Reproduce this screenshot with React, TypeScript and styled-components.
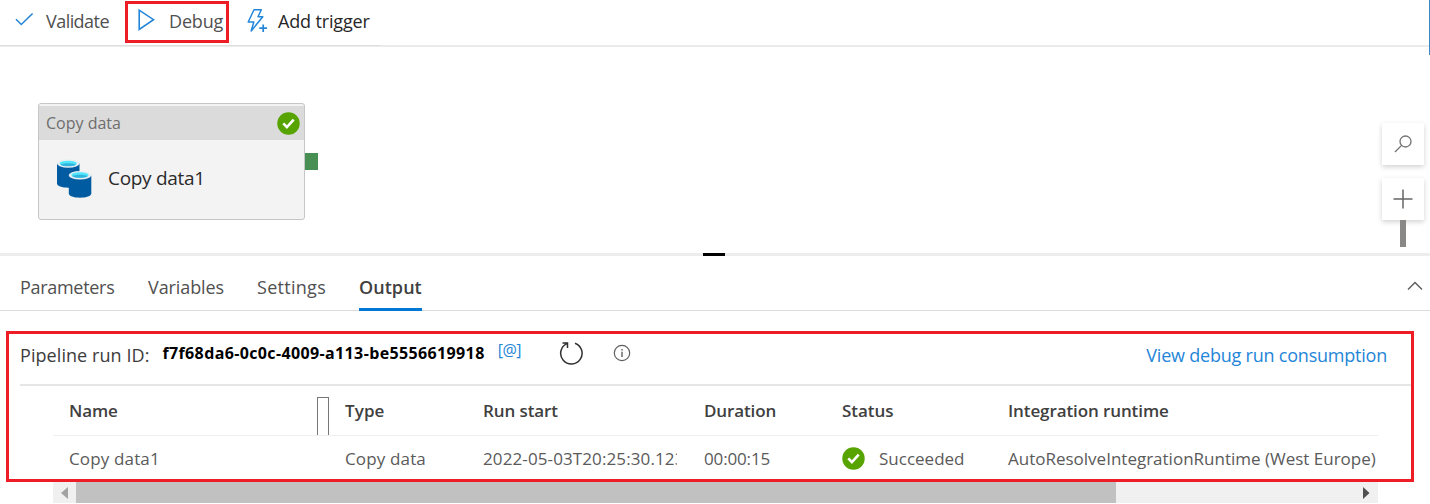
import React from "react";
import styled, { createGlobalStyle } from "styled-components";

const Global = createGlobalStyle`
  * { box-sizing: border-box; }
  body { margin: 0; background: #fff; overflow: hidden; font-family: "Open Sans", "Noto Sans", sans-serif; }
  svg { display: block; flex: none; }
`;

const Page = styled.div`
  position: relative;
  display: flex;
  flex-direction: column;
  width: 1430px;
  height: 504px;
  overflow: hidden;
  background: #fff;
`;

const Label = styled.span<{ $size?: number; $track?: number; $color?: string; $weight?: number }>`
  font-size: ${(p) => p.$size ?? 18}px;
  line-height: 24px;
  letter-spacing: ${(p) => p.$track ?? 0}px;
  color: ${(p) => p.$color ?? "#505050"};
  font-weight: ${(p) => p.$weight ?? 400};
  white-space: nowrap;
`;

const EdgeBar = styled.div`
  position: absolute;
  top: 0;
  right: 0;
  width: 1px;
  height: 55px;
  background: #3b8bcb;
`;

const Toolbar = styled.div`
  display: flex;
  height: 47px;
  flex: none;
  border-bottom: 2px solid #ebebeb;
`;

const ToolGroup = styled.div`
  display: flex;
  align-items: flex-start;
  width: 380px;
  height: 46px;
  border-bottom: 1px solid #dedede;
`;

const ToolButton = styled.div<{ $pad: string; $gap: number }>`
  display: flex;
  align-items: flex-start;
  gap: ${(p) => p.$gap}px;
  padding: ${(p) => p.$pad};
`;

const ToolLabel = styled(Label)`
  margin-top: 9px;
`;

const DebugButton = styled(ToolButton)`
  width: 104px;
  height: 42px;
  margin: 1px 0 0 16px;
  border: 3px solid #ee1c25;

  ${ToolLabel} { margin-top: 5px; }
`;

const Canvas = styled.div`
  display: flex;
  justify-content: space-between;
  height: 206px;
  flex: none;
  padding: 56px 6px 0 38px;
`;

const ActivityWrap = styled.div`
  display: flex;
  align-items: flex-start;
`;

const Activity = styled.div`
  width: 267px;
  height: 117px;
  border: 1px solid #c6c6c6;
  border-radius: 3px;
  background: #f3f3f3;
  padding-top: 2px;
`;

const ActivityHeader = styled.div`
  display: flex;
  align-items: center;
  justify-content: space-between;
  height: 34px;
  padding: 0 4px 0 7px;
  background: #dbdbdb;
`;

const ActivityBody = styled.div`
  display: flex;
  align-items: flex-start;
  gap: 16px;
  height: 77px;
  padding: 19px 0 0 18px;
`;

const ActivityName = styled(Label)`
  margin-top: 7px;
`;

const Port = styled.div`
  width: 13px;
  height: 17px;
  margin-top: 50px;
  background: #488f54;
`;

const CanvasTools = styled.div`
  display: flex;
  flex-direction: column;
  align-items: center;
  padding-top: 20px;
`;

const CanvasButton = styled.div`
  display: flex;
  align-items: center;
  justify-content: center;
  width: 42px;
  height: 42px;
  padding: 0 1px 1px 0;
  margin-bottom: 13px;
  background: #fff;
  box-shadow: 0 2px 5px rgba(0, 0, 0, 0.18);

  & + & { margin-bottom: 0; }
`;

const ZoomTrack = styled.div`
  width: 6px;
  height: 27px;
  background: #8a8886;
`;

const Splitter = styled.div`
  display: flex;
  justify-content: center;
  height: 3px;
  flex: none;
  background: #ededed;
`;

const Grip = styled.div`
  width: 22px;
  height: 3px;
  margin-right: 2px;
  background: #000;
`;

const Tabs = styled.div`
  display: flex;
  height: 55px;
  flex: none;
  padding-left: 20px;
  border-bottom: 1px solid #dcdcdc;
`;

const Tab = styled.div<{ $width: number; $gap: number; $active?: boolean }>`
  width: ${(p) => p.$width}px;
  height: 55px;
  margin-right: ${(p) => p.$gap}px;
  padding-top: 19px;
  border-bottom: ${(p) => (p.$active ? "3px solid #0078d4" : "0")};
`;

const Collapse = styled.div`
  margin: 25px 7px 0 auto;
`;

const OutputPanel = styled.div`
  width: 1408px;
  height: 151px;
  flex: none;
  margin: 20px 0 0 6px;
  border: 3px solid #ee1c25;
`;

const RunBar = styled.div`
  display: flex;
  height: 52px;
  margin-left: 11px;
  padding-right: 24px;
  border-bottom: 2px solid #e6e6e6;
`;

const Item = styled.div<{ $top: number; $left?: number }>`
  margin: ${(p) => p.$top}px 0 0 ${(p) => p.$left ?? 0}px;
`;

const LinkItem = styled.div`
  margin: 9px 0 0 auto;
`;

const Row = styled.div<{ $height: number; $header?: boolean }>`
  display: grid;
  grid-template-columns: 276px 138px 221px 138px 166px 1fr;
  align-items: center;
  width: 1325px;
  height: ${(p) => p.$height}px;
  margin-left: 44px;
  padding-left: 16px;
  border-bottom: ${(p) => (p.$header ? "1px solid #efefef" : "0")};
`;

const Cell = styled.div<{ $clip?: number }>`
  display: flex;
  align-items: center;
  width: ${(p) => (p.$clip ? `${p.$clip}px` : "auto")};
  overflow: ${(p) => (p.$clip ? "hidden" : "visible")};
`;

const ColumnGrip = styled.div`
  width: 12px;
  height: 38px;
  margin: 11px 16px 0 auto;
  border: 1.5px solid #767676;
  border-bottom: 0;
`;

const StatusCell = styled(Cell)`
  gap: 14px;
`;

const Scrollbar = styled.div`
  display: flex;
  align-items: center;
  width: 1325px;
  height: 21px;
  flex: none;
  margin-left: 53px;
  background: #f0f0f0;
`;

const Thumb = styled.div`
  width: 1040px;
  height: 21px;
  margin-left: 8px;
  background: #c1c1c1;
`;

const ScrollArrow = styled.svg<{ $left: number }>`
  margin-left: ${(p) => p.$left}px;
`;

const Success = () => (
  <svg width="23" height="23" viewBox="0 0 23 23">
    <circle cx="11.5" cy="11.5" r="11.2" fill="#57a300" />
    <path d="M6.3 11.4l3.6 3.7 6.8-7.4" fill="none" stroke="#fff" strokeWidth="2.6" />
  </svg>
);

const CopyDataIcon = () => (
  <svg width="35" height="40" viewBox="0 0 35 40">
    <path d="M0 4.5v20c0 2.4 5 4.2 11.3 4.2s11.2-1.8 11.2-4.2v-20z" fill="#005ba1" />
    <ellipse cx="11.25" cy="4.5" rx="11.25" ry="4.2" fill="#e8eef2" />
    <ellipse cx="11.25" cy="4.4" rx="8.6" ry="2.7" fill="#50e6ff" />
    <path d="M3.5 5.7c2-2 13.5-2 15.500 0-3 2-12.500 2-15.500 0z" fill="#32b5dc" />
    <path d="M11.8 16.500v18c0 2.4 5 4.2 11.2 4.2s11.3-1.8 11.3-4.2v-18z" fill="#005ba1" />
    <ellipse cx="23" cy="16.2" rx="11.3" ry="4.3" fill="#e8eef2" />
    <ellipse cx="23" cy="16" rx="8.700" ry="2.800" fill="#50e6ff" />
    <path d="M15.3 17.3c2-2 13.4-2 15.4 0-3 2-12.4 2-15.4 0z" fill="#32b5dc" />
  </svg>
);

const headers: [string, number][] = [
  ["Type", 0.1], ["Run start", -0.1], ["Duration", -0.12], ["Status", -0.05], ["Integration runtime", -0.1],
];

export default function App() {
  return (
    <Page>
      <Global />
      <Toolbar>
        <ToolGroup>
          <ToolButton $pad="0 0 0 15px" $gap={12}>
            <svg width="19" height="40" viewBox="0 0 19 40">
              <path d="M1 19.2l5.3 5.3L17.6 13.5" fill="none" stroke="#2486d8" strokeWidth="1.6" />
            </svg>
            <ToolLabel $track={-0.55}>Validate</ToolLabel>
          </ToolButton>
          <DebugButton $pad="0 0 0 10px" $gap={14}>
            <svg width="17" height="30" viewBox="0 0 17 30">
              <path d="M1.2 6.2v19.2L15.5 15.7z" fill="none" stroke="#2486d8" strokeWidth="1.6" />
            </svg>
            <ToolLabel $track={-0.15}>Debug</ToolLabel>
          </DebugButton>
          <ToolButton $pad="0 0 0 18px" $gap={11}>
            <svg width="20" height="40" viewBox="0 0 20 40">
              <path d="M7 9.7h7.3l-3.3 7h4.8L4.2 31l2.6-9H1.2z" fill="none" stroke="#2486d8" strokeWidth="1.5" strokeLinejoin="round" />
              <path d="M10.8 28.2h9.2M15.6 23.6v9.2" stroke="#fff" strokeWidth="4" />
              <path d="M12.3 28.2H20M16.2 24.4V32" stroke="#2486d8" strokeWidth="1.7" />
            </svg>
            <ToolLabel $track={-0.15} $color="#262626">Add trigger</ToolLabel>
          </ToolButton>
        </ToolGroup>
      </Toolbar>

      <Canvas>
        <ActivityWrap>
          <Activity>
            <ActivityHeader>
              <Label $size={16} $track={0} $color="#6e6e6e">Copy data</Label>
              <Success />
            </ActivityHeader>
            <ActivityBody>
              <CopyDataIcon />
              <ActivityName $size={19} $track={-0.3} $color="#2b2b2b">Copy data1</ActivityName>
            </ActivityBody>
          </Activity>
          <Port />
        </ActivityWrap>
        <CanvasTools>
          <CanvasButton>
            <svg width="20" height="20" viewBox="0 0 20 20" fill="none" stroke="#737373" strokeWidth="1.3">
              <circle cx="12.5" cy="7.5" r="5.5" />
              <path d="M8.6 11.4L2 18" />
            </svg>
          </CanvasButton>
          <CanvasButton>
            <svg width="20" height="20" viewBox="0 0 20 20" stroke="#666" strokeWidth="1.5">
              <path d="M0.5 10h19M10 0.5v19" />
            </svg>
          </CanvasButton>
          <ZoomTrack />
        </CanvasTools>
      </Canvas>

      <Splitter><Grip /></Splitter>

      <Tabs>
        <Tab $width={94} $gap={34}><Label $track={-0.3}>Parameters</Label></Tab>
        <Tab $width={76} $gap={33}><Label $track={-0.1}>Variables</Label></Tab>
        <Tab $width={69} $gap={33}><Label $track={0.28}>Settings</Label></Tab>
        <Tab $width={63} $gap={0} $active><Label $track={0.05} $weight={600} $color="#404040">Output</Label></Tab>
        <Collapse>
          <svg width="16" height="10" viewBox="0 0 16 10">
            <path d="M1 8.5l7-7 7 7" fill="none" stroke="#606060" strokeWidth="1.5" />
          </svg>
        </Collapse>
      </Tabs>

      <OutputPanel>
        <RunBar>
          <Item $top={9}><Label $track={0.07} $color="#3c3c3c">Pipeline run ID:</Label></Item>
          <Item $top={7} $left={13}><Label $size={16} $track={0.37} $weight={700} $color="#000">f7f68da6-0c0c-4009-a113-be5556619918</Label></Item>
          <Item $top={4} $left={13}><Label $size={16} $track={-0.5} $weight={500} $color="#2486d8">[@]</Label></Item>
          <Item $top={7} $left={38}>
            <svg width="25" height="25" viewBox="0 0 25 25" fill="none" stroke="#303030" strokeWidth="1.5">
              <path d="M16 2.2a10.7 10.7 0 1 1-8.2.4M3.5 1.9h5v5" />
            </svg>
          </Item>
          <Item $top={10} $left={29}>
            <svg width="18" height="18" viewBox="0 0 18 18" fill="none" stroke="#606060" strokeWidth="1.2">
              <circle cx="9" cy="9" r="7.7" />
              <path d="M9 7.7v5.3M9 5v1.5" strokeWidth="1.4" />
            </svg>
          </Item>
          <LinkItem><Label $track={-0.22} $color="#2486d8">View debug run consumption</Label></LinkItem>
        </RunBar>
        <Row $height={50} $header>
          <Cell>
            <Label $size={17} $track={-0.15} $weight={600} $color="#404040">Name</Label>
            <ColumnGrip />
          </Cell>
          {headers.map(([text, track]) => (
            <Cell key={text}><Label $size={17} $weight={600} $color="#404040" $track={track}>{text}</Label></Cell>
          ))}
        </Row>
        <Row $height={45}>
          <Cell><Label $size={17} $track={0.15} $color="#5a5a5a">Copy data1</Label></Cell>
          <Cell><Label $size={17} $track={0.15} $color="#5a5a5a">Copy data</Label></Cell>
          <Cell $clip={194}><Label $size={17} $track={0.11} $color="#5a5a5a">2022-05-03T20:25:30.123</Label></Cell>
          <Cell><Label $size={17} $track={-0.15} $color="#5a5a5a">00:00:15</Label></Cell>
          <StatusCell><Success /><Label $size={17} $track={0} $color="#5a5a5a">Succeeded</Label></StatusCell>
          <Cell><Label $size={17} $track={0} $color="#5a5a5a">AutoResolveIntegrationRuntime (West Europe)</Label></Cell>
        </Row>
      </OutputPanel>

      <Scrollbar>
        <ScrollArrow $left={8} width="7" height="12" viewBox="0 0 7 12"><path d="M7 0v12L0 6z" fill="#a3a3a3" /></ScrollArrow>
        <Thumb />
        <ScrollArrow $left={247} width="7" height="12" viewBox="0 0 7 12"><path d="M0 0v12l6.5-6z" fill="#505050" /></ScrollArrow>
      </Scrollbar>
      <EdgeBar />
    </Page>
  );
}
